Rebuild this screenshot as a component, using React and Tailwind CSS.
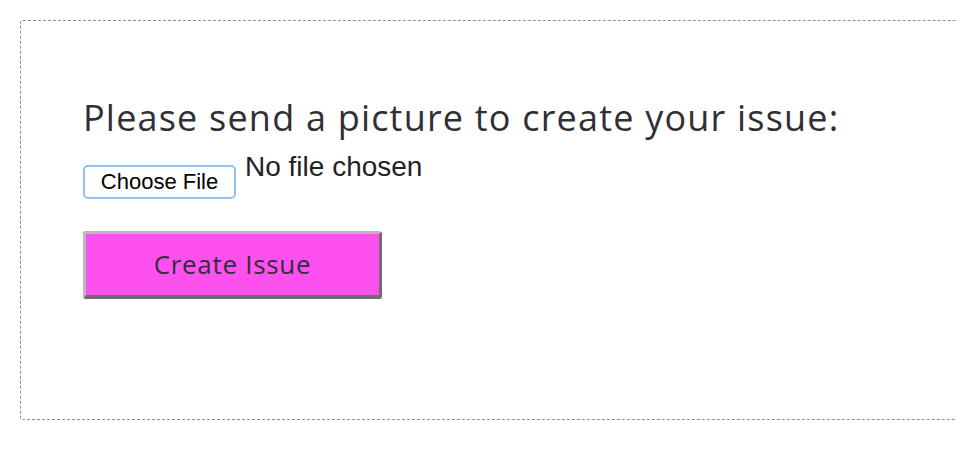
import React from 'react';

const App = () => {
  return (
    <div className="w-full h-[462px] overflow-hidden bg-white">
      <div className="ml-5 mt-5 w-[1000px] h-[400px] border border-dashed border-[#8f8f8f] rounded-[3px] pl-[62px] pt-[75px]">
        <h1 className="font-['Open_Sans',sans-serif] text-[36px] leading-[43px] tracking-[1.2px] text-[#2f2f35]">
          Please send a picture to create your issue:
        </h1>

        {/* File picker */}
        <div className="flex items-start mt-[12px]">
          <button className="mt-[14px] w-[153px] h-[34px] bg-white border-2 border-[#94c0f4] rounded-[5px] font-['Liberation_Sans',sans-serif] text-[22px] leading-none text-black">
            Choose File
          </button>
          <span className="ml-[9px] font-['Liberation_Sans',sans-serif] text-[28px] leading-[32px] text-[#222]">
            No file chosen
          </span>
        </div>

        <button className="mt-[32px] w-[299px] h-[68px] bg-[#fd50ee] border-[3px] border-t-[#bababa] border-l-[#bababa] border-r-[#6e6e6e] border-b-[#6e6e6e] border-b-4 rounded-[3px] font-['Open_Sans',sans-serif] text-[26px] tracking-[0.7px] text-[#2f2f3a]">
          Create Issue
        </button>
      </div>
    </div>
  );
};

export default App;
